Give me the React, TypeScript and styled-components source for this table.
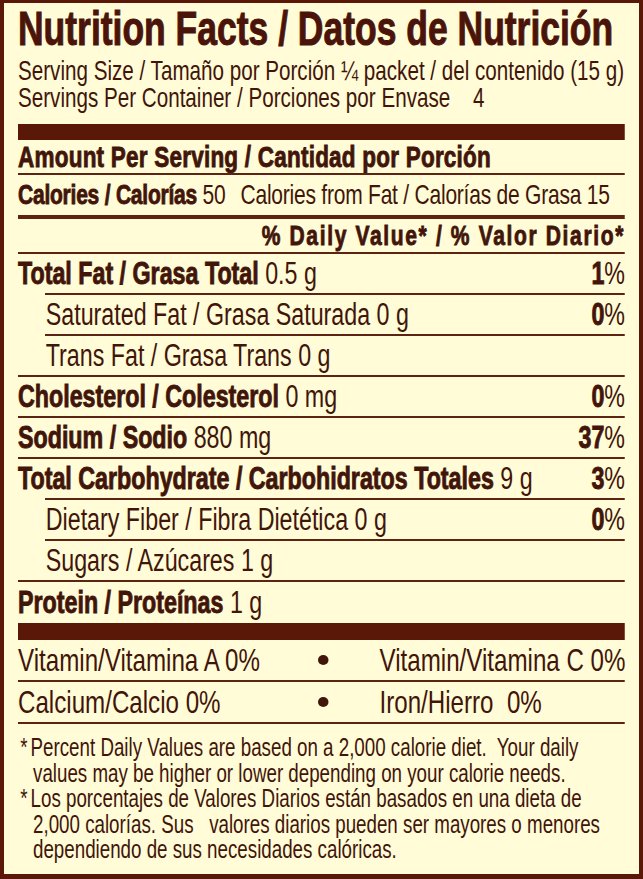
import React from "react";
import styled, { createGlobalStyle } from "styled-components";

const INK = "#42150a";
const BAR = "#5a1809";
const RULE = "#5b2413";
const CREAM = "#fffcd7";
const FONT = '"Liberation Sans", Arial, sans-serif';

/* The label type is a condensed grotesque; it is set in Liberation Sans
   and the whole sheet is squeezed horizontally by this factor. */
const SQUEEZE = 0.75;
const INNER_W = 607 / SQUEEZE;

const Global = createGlobalStyle`
  html, body { margin: 0; padding: 0; background: ${CREAM}; }
  #root { width: 643px; }
`;

const Label = styled.section`
  box-sizing: border-box;
  width: 643px;
  height: 879px;
  border: 4px solid ${BAR};
  border-top-width: 3px;
  border-bottom-width: 5px;
  background: ${CREAM};
  padding: 0 14px;
  overflow: hidden;
`;

const Sheet = styled.div`
  width: ${INNER_W}px;
  height: 100%;
  transform: scaleX(${SQUEEZE});
  transform-origin: 0 0;
  display: flex;
  flex-direction: column;
  font-family: ${FONT};
  color: ${INK};
`;

const Title = styled.h1`
  margin: 0;
  height: 52px;
  flex-shrink: 0;
  display: flex;
  align-items: center;
  font-size: 47.3px;
  font-weight: 700;
  line-height: 1;
  white-space: nowrap;
  color: #4a140a;
  -webkit-text-stroke: 1px #4a140a;
`;

const ServingLine = styled.div<{ $first?: boolean }>`
  height: 27px;
  flex-shrink: 0;
  margin-top: ${(p) => (p.$first ? 2 : 0)}px;
  font-size: 27.5px;
  line-height: 27px;
  white-space: pre;
`;

const ThickBar = styled.div<{ $top?: number; $h?: number }>`
  height: ${(p) => p.$h ?? 16}px;
  margin-top: ${(p) => p.$top ?? 0}px;
  background: ${BAR};
  flex-shrink: 0;
`;

const Rule = styled.div<{ $w?: number; $indent?: boolean }>`
  height: ${(p) => p.$w ?? 2}px;
  margin-left: ${(p) => (p.$indent ? 36 : 0)}px;
  background: ${RULE};
  flex-shrink: 0;
`;

const Row = styled.div<{ $h?: number; $indent?: boolean; $size?: number; $align?: string }>`
  height: ${(p) => p.$h ?? 39}px;
  flex-shrink: 0;
  display: flex;
  align-items: center;
  justify-content: ${(p) => p.$align ?? "space-between"};
  padding-left: ${(p) => (p.$indent ? 37 : 0)}px;
  font-size: ${(p) => p.$size ?? 31}px;
  line-height: 1;
  white-space: pre;
`;

const Strong = styled.span<{ $spacing?: number }>`
  font-weight: 700;
  letter-spacing: ${(p) => p.$spacing ?? 0}px;
  -webkit-text-stroke: 0.9px ${INK};
`;

const Light = styled.span<{ $gap?: number; $spacing?: number }>`
  font-weight: 400;
  margin-left: ${(p) => p.$gap ?? 0}px;
  letter-spacing: ${(p) => p.$spacing ?? 0}px;
`;

const Pct = styled.span`
  font-weight: 400;
  b {
    font-weight: 700;
    -webkit-text-stroke: 0.9px ${INK};
  }
`;

const VitRow = styled.div<{ $h?: number }>`
  height: ${(p) => p.$h ?? 40}px;
  flex-shrink: 0;
  display: grid;
  grid-template-columns: 380px 54px 1fr;
  align-items: center;
  font-size: 32.2px;
  line-height: 1;
  white-space: pre;
`;

const Bullet = styled.span`
  justify-self: center;
  width: 14px;
  height: 10px;
  border-radius: 50%;
  background: ${INK};
`;

const VitRight = styled.span`
  padding-left: 48px;
`;

const Notes = styled.div`
  flex: 1;
  padding-top: 11px;
  font-size: 25px;
  line-height: 25.5px;
`;

const NoteLine = styled.div<{ $cont?: boolean }>`
  white-space: pre;
  padding-left: ${(p) => (p.$cont ? 20 : 3)}px;
`;

const Star = styled.span`
  margin-right: 4px;
`;

export default function App() {
  return (
    <>
      <Global />
      <Label>
        <Sheet>
          <Title>Nutrition Facts / Datos de Nutrición</Title>
          <ServingLine $first>Serving Size / Tamaño por Porción ¼ packet / del contenido (15 g)</ServingLine>
          <ServingLine>Servings Per Container / Porciones por Envase    4</ServingLine>
          <ThickBar $top={13} />

          <Row $h={33} $size={30}>
            <Strong $spacing={0.3}>Amount Per Serving / Cantidad por Porción</Strong>
          </Row>
          <Rule />
          <Row $h={40} $size={28} $align="flex-start">
            <span>
              <Strong $spacing={-0.3}>Calories / Calorías</Strong>
              <Light $spacing={-0.3}> 50</Light>
              <Light $gap={20} $spacing={-0.3}>Calories from Fat / Calorías de Grasa 15</Light>
            </span>
          </Row>
          <Rule $w={4} />
          <Row $h={33} $size={28} $align="flex-end">
            <Strong $spacing={2.2}>% Daily Value* / % Valor Diario*</Strong>
          </Row>
          <Rule />

          <Row>
            <span>
              <Strong>Total Fat / Grasa Total</Strong> 0.5 g
            </span>
            <Pct>
              <b>1</b>%
            </Pct>
          </Row>
          <Rule $indent />
          <Row $indent>
            <span>Saturated Fat / Grasa Saturada 0 g</span>
            <Pct>
              <b>0</b>%
            </Pct>
          </Row>
          <Rule $indent />
          <Row $indent>
            <span>Trans Fat / Grasa Trans 0 g</span>
          </Row>
          <Rule />
          <Row>
            <span>
              <Strong>Cholesterol / Colesterol</Strong> 0 mg
            </span>
            <Pct>
              <b>0</b>%
            </Pct>
          </Row>
          <Rule />
          <Row>
            <span>
              <Strong>Sodium / Sodio</Strong> 880 mg
            </span>
            <Pct>
              <b>37</b>%
            </Pct>
          </Row>
          <Rule />
          <Row>
            <span>
              <Strong>Total Carbohydrate / Carbohidratos Totales</Strong> 9 g
            </span>
            <Pct>
              <b>3</b>%
            </Pct>
          </Row>
          <Rule $indent />
          <Row $indent>
            <span>Dietary Fiber / Fibra Dietética 0 g</span>
            <Pct>
              <b>0</b>%
            </Pct>
          </Row>
          <Rule $indent />
          <Row $indent>
            <span>Sugars / Azúcares 1 g</span>
          </Row>
          <Rule />
          <Row $h={41}>
            <span>
              <Strong>Protein / Proteínas</Strong> 1 g
            </span>
          </Row>
          <ThickBar $h={17} />

          <VitRow>
            <span>Vitamin/Vitamina A 0%</span>
            <Bullet />
            <VitRight>Vitamin/Vitamina C 0%</VitRight>
          </VitRow>
          <Rule />
          <VitRow>
            <span>Calcium/Calcio 0%</span>
            <Bullet />
            <VitRight>Iron/Hierro  0%</VitRight>
          </VitRow>
          <Rule />

          <Notes>
            <NoteLine>
              <Star>*</Star>Percent Daily Values are based on a 2,000 calorie diet.  Your daily
            </NoteLine>
            <NoteLine $cont>values may be higher or lower depending on your calorie needs.</NoteLine>
            <NoteLine>
              <Star>*</Star>Los porcentajes de Valores Diarios están basados en una dieta de
            </NoteLine>
            <NoteLine $cont>2,000 calorías. Sus   valores diarios pueden ser mayores o menores</NoteLine>
            <NoteLine $cont>dependiendo de sus necesidades calóricas.</NoteLine>
          </Notes>
        </Sheet>
      </Label>
    </>
  );
}
